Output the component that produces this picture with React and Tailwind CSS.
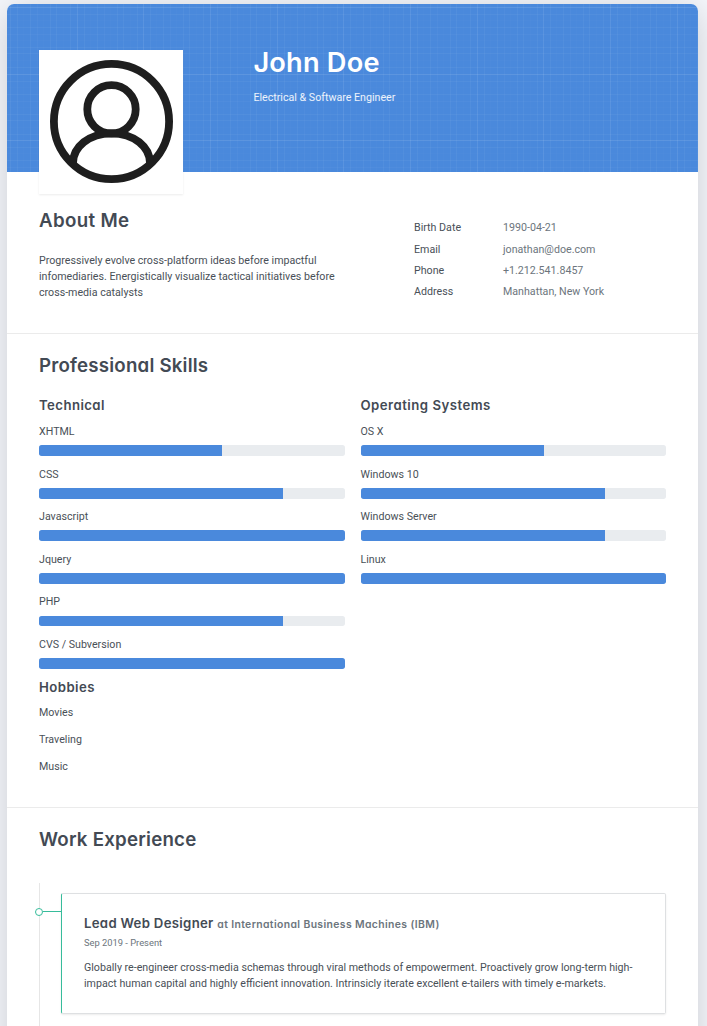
import React from "react";

const heading =
  "font-['Inter',sans-serif] font-semibold text-[#434a54] [font-feature-settings:'cv11'] whitespace-nowrap";

const contact = [
  ["Birth Date", "1990-04-21"],
  ["Email", "jonathan@doe.com"],
  ["Phone", "+1.212.541.8457"],
  ["Address", "Manhattan, New York"],
];

const technical = [
  ["XHTML", 60],
  ["CSS", 80],
  ["Javascript", 100],
  ["Jquery", 100],
  ["PHP", 80],
  ["CVS / Subversion", 100],
];

const systems = [
  ["OS X", 60],
  ["Windows 10", 80],
  ["Windows Server", 80],
  ["Linux", 100],
];

// Major lines of the header grid, and the offsets of the minor lines after each.
const majorX = [3, 70, 136, 203, 270, 336, 403, 470, 536, 603, 670];
const majorY = [-63, 3, 70, 136];
const minorSteps = [
  [7, 0.045],
  [13, 0.015],
  [20, 0.045],
  [27, 0.03],
  [33, 0.015],
  [40, 0.045],
  [46, 0.045],
  [53, 0.015],
  [60, 0.045],
];

function GraphPaper() {
  return (
    <svg className="absolute inset-0 h-full w-full rounded-t-[7px]" fill="#fff" aria-hidden="true">
      {majorX.map((x) => (
        <g key={x}>
          <rect x={x} y="0" width="1" height="168" opacity={x === 3 ? 0.05 : 0.085} />
          {minorSteps.map(([d, o]) => (
            <rect key={d} x={x + d} y="0" width="1" height="168" opacity={o} />
          ))}
        </g>
      ))}
      {majorY.map((y) => (
        <g key={y}>
          <rect x="0" y={y} width="691" height="1" opacity="0.1" />
          {minorSteps.map(([d, o]) => (
            <rect key={d} x="0" y={y + d} width="691" height="1" opacity={o} />
          ))}
        </g>
      ))}
    </svg>
  );
}

function Avatar() {
  return (
    <div className="mt-[46px] h-36 w-36 shrink-0 bg-white shadow-[0_1px_2px_rgba(0,0,0,0.08)]">
      <svg viewBox="0 0 144 144" className="h-full w-full" fill="none" stroke="#1e1e1e" strokeWidth="7.8">
        <circle cx="72.5" cy="71.5" r="57.6" />
        <circle cx="72.5" cy="59.3" r="24.2" />
        <path d="M34 113C34 97 50 83.3 72.5 83.3S111 97 111 113" />
      </svg>
    </div>
  );
}

function Skills({ items }) {
  return items.map(([name, value]) => (
    <div key={name} className="mb-[10.6px]">
      <div className="mb-[5.33px] leading-4">{name}</div>
      <div className="h-[10.67px] overflow-hidden rounded-[2.67px] bg-[#e9ecef]">
        <div className="h-full bg-[#4a89dc]" style={{ width: `${value}%` }} />
      </div>
    </div>
  ));
}

export default function App() {
  return (
    <div className="h-[1026px] overflow-hidden bg-[#f5f7fc] pt-1 pr-[9px] pl-[7px] font-['Roboto',sans-serif] text-[10.66px] leading-4 text-[#495057]">
      <div className="h-[1200px] rounded-t-[7px] bg-white shadow-[0_4px_36px_rgba(0,0,0,0.17)]">
        <header className="relative flex h-[168px] rounded-t-[7px] bg-[#4a89dc] pl-8">
          <GraphPaper />
          <div className="relative flex text-white">
            <Avatar />
            <div className="ml-[70.4px] pt-[43px]">
              <h1 className="font-['Inter',sans-serif] text-[27.2px] leading-8 font-semibold tracking-[0.2px] whitespace-nowrap">John Doe</h1>
              <p className="mt-[11px] text-white/90">Electrical &amp; Software Engineer</p>
            </div>
          </div>
        </header>

        <section className="flex h-[162px] border-b border-[#ebebeb] pl-8">
          <div className="w-[375px] pt-[37px]">
            <h2 className={`${heading} text-[18.7px] leading-6 tracking-[0.35px]`}>About Me</h2>
            <p className="mt-5 w-[306px]">
              Progressively evolve cross-platform ideas before impactful infomediaries. Energistically visualize tactical
              initiatives before cross-media catalysts
            </p>
          </div>
          <dl className="flex flex-col gap-[5.33px] pt-[48.2px]">
            {contact.map(([k, v]) => (
              <div key={k} className="flex">
                <dt className="w-[89px]">{k}</dt>
                <dd className="text-[#6c757d]">{v}</dd>
              </div>
            ))}
          </dl>
        </section>

        <section className="h-[474px] border-b border-[#ebebeb] px-8 pt-5">
          <h2 className={`${heading} text-[18.7px] leading-6 tracking-[0.2px]`}>Professional Skills</h2>
          <div className="mt-[17px] grid grid-cols-2 gap-4">
            <div>
              <h3 className={`${heading} mb-[9px] text-[13.2px] leading-5 tracking-[0.42px]`}>Technical</h3>
              <Skills items={technical} />
              <h3 className={`${heading} mt-[-2.6px] text-[13.2px] leading-5 tracking-[0.45px]`}>Hobbies</h3>
              <ul className="mt-[8.5px] flex flex-col gap-[10.67px]">
                <li>Movies</li>
                <li>Traveling</li>
                <li>Music</li>
              </ul>
            </div>
            <div>
              <h3 className={`${heading} mb-[9px] text-[13.2px] leading-5 tracking-[0.48px]`}>Operating Systems</h3>
              <Skills items={systems} />
            </div>
          </div>
        </section>

        <section className="px-8 pt-5">
          <h2 className={`${heading} text-[18.7px] leading-6 tracking-[0.22px]`}>Work Experience</h2>
          <div className="mt-[31px] h-60 border-l border-[#e6e6e6] pt-[10px] pl-[21px]">
            <article className="relative h-[121px] rounded-[2px] border border-[#dee0e2] border-l-[#37bc9b] pt-[19px] pl-[22px] shadow-[0_1px_2px_rgba(0,0,0,0.08)]">
              <svg className="absolute top-[13px] -left-[27px] h-[10px] w-[27px]" fill="none" stroke="#37bc9b">
                <path d="M8 4.5H27" />
                <circle cx="4" cy="5" r="3.5" fill="#fff" />
              </svg>
              <h4 className={`${heading} text-[13.2px] leading-5 tracking-[0.3px]`}>
                Lead Web Designer{" "}
                <span className="text-[10.4px] tracking-[0.38px] text-[#6c757d]">at International Business Machines (IBM)</span>
              </h4>
              <div className="text-[9.333px] leading-4 text-[#6c757d]">Sep 2019 - Present</div>
              <p className="mt-[9px] w-[562px]">
                Globally re-engineer cross-media schemas through viral methods of empowerment. Proactively grow long-term
                high-impact human capital and highly efficient innovation. Intrinsicly iterate excellent e-tailers with timely
                e-markets.
              </p>
            </article>
          </div>
        </section>
      </div>
    </div>
  );
}
